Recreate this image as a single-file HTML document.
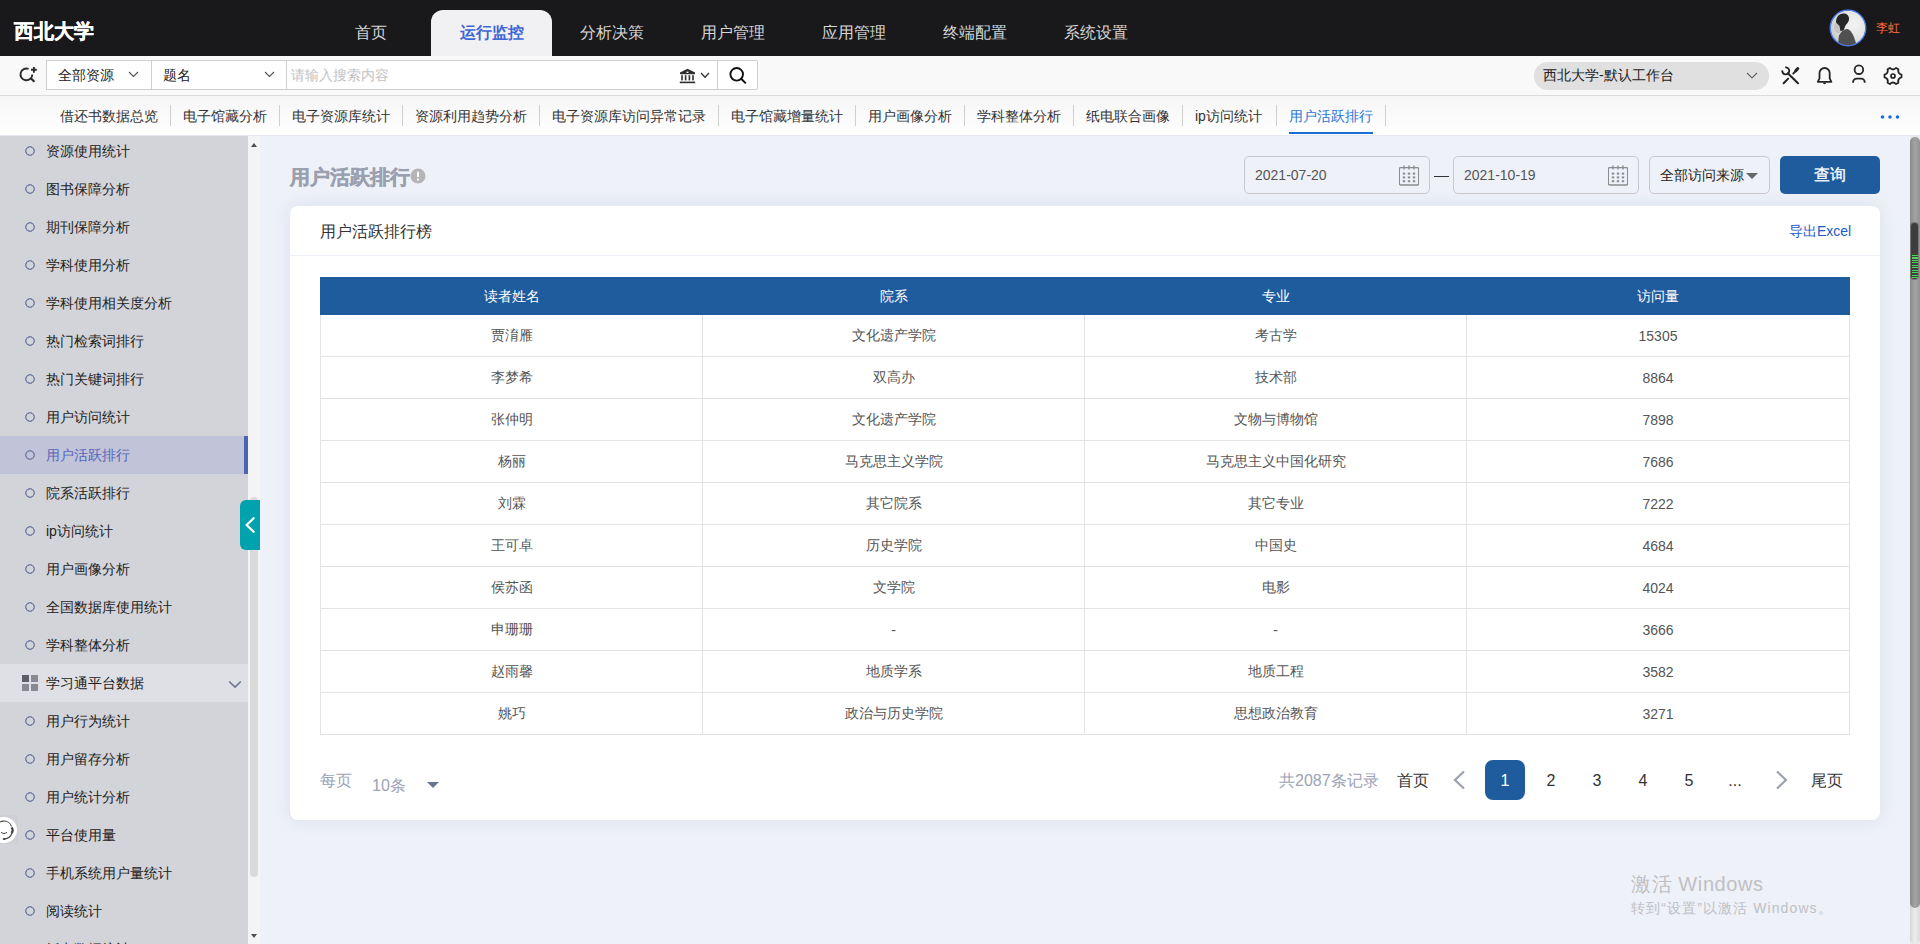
<!DOCTYPE html>
<html><head><meta charset="utf-8">
<style>
*{box-sizing:border-box;margin:0;padding:0}
html,body{width:1920px;height:944px;overflow:hidden;font-family:"Liberation Sans",sans-serif;background:#eef1f8;position:relative;color:#333}
.abs{position:absolute}
.b{-webkit-text-stroke:0.5px currentColor}
#top{left:0;top:0;width:1920px;height:56px;background:#19191b}
#logo{left:14px;top:17px;font-size:20px;color:#fff;line-height:28px;font-weight:700;-webkit-text-stroke:0.4px #fff}
.nav{top:10px;height:46px;width:121px;text-align:center;font-size:16px;line-height:46px;color:#d6d6d6}
.nav.act{background:#f1f1f4;color:#3f66d6;border-radius:12px 12px 0 0;font-weight:700}
#avatar{left:1830px;top:10px;width:36px;height:36px;border-radius:50%;border:1px solid #4a7cf0;background:radial-gradient(circle at 65% 40%,#f4f4f4 0,#e2e2e2 45%,#bdbdbd 100%);overflow:hidden}
#uname{left:1876px;top:18px;font-size:12px;line-height:20px;color:#ff6d3f}
#bar2{left:0;top:56px;width:1920px;height:40px;background:#f9f9f9;border-bottom:1px solid #dcdcdc}
.sel{top:60px;height:30px;border:1px solid #cfcfcf;background:#fff;font-size:14px;line-height:28px;color:#222;padding-left:11px}
#tabs{left:0;top:96px;width:1920px;height:40px;background:linear-gradient(#f6f6f6,#fff);border-bottom:1px solid #e6e9f2}
.tab{top:96px;font-size:14px;line-height:40px;color:#333;white-space:nowrap}
.sep{top:105px;width:1px;height:21px;background:#d0d0d0}
.tab.act{color:#2576d6}
#side{left:0;top:136px;width:248px;height:808px;background:#d3d4d9;overflow:hidden;padding-top:0}
#side>div:first-child{margin-top:-4px}
.si{height:38px;position:relative;font-size:14px;line-height:38px;color:#222;padding-left:46px}
.si:before{content:"";position:absolute;left:24px;top:13px;width:12px;height:12px;background:radial-gradient(circle at 6px 6px,transparent 3.3px,#7882a6 3.8px,#7882a6 4.6px,transparent 5.1px)}
.si.act{background:#c1c3d8;color:#5566b8}
.si.act:after{content:"";position:absolute;right:0;top:0;width:4px;height:38px;background:#4f63b4}
.grp{height:38px;position:relative;font-size:14px;line-height:38px;color:#222;padding-left:46px;background:#dfe0e5}
#sscroll{left:248px;top:136px;width:12px;height:808px;background:#f4f4f4}
#rscroll{left:1910px;top:136px;width:10px;height:808px;background:#e9e9e9}
#title{left:290px;top:163px;font-size:20px;line-height:28px;color:#9aa0b0;font-weight:700;-webkit-text-stroke:0.4px #9aa0b0}
.inp{top:156px;height:38px;border:1px solid #c9c9cc;border-radius:5px;font-size:14px;line-height:36px;color:#555;padding-left:10px}
#card{left:290px;top:206px;width:1590px;height:614px;background:#fff;border-radius:8px;box-shadow:0 0 16px rgba(180,190,220,0.35)}
table{border-collapse:collapse;table-layout:fixed}
td,th{text-align:center;font-size:14px;color:#555;height:42px;border:1px solid #e3e3e3;font-weight:normal;padding-top:1px}
th{background:#1f5c9e;color:#fff;height:37px;border-color:#1f5c9e}
.pg{top:760px;width:40px;height:40px;text-align:center;line-height:42px;font-size:16px;color:#333}
</style></head><body>
<div id="top" class="abs"></div>
<div id="logo" class="abs">西北大学</div>
<div class="abs nav" style="left:310px">首页</div>
<div class="abs nav act" style="left:431px">运行监控</div>
<div class="abs nav" style="left:551px">分析决策</div>
<div class="abs nav" style="left:672px">用户管理</div>
<div class="abs nav" style="left:793px">应用管理</div>
<div class="abs nav" style="left:914px">终端配置</div>
<div class="abs nav" style="left:1035px">系统设置</div>
<svg class="abs" style="left:1829px;top:9px" width="38" height="38" viewBox="0 0 38 38"><defs><clipPath id="ac"><circle cx="19" cy="19" r="17.5"/></clipPath><radialGradient id="ag" cx="0.65" cy="0.4" r="0.75"><stop offset="0" stop-color="#f3f3f3"/><stop offset="0.55" stop-color="#e2e2e2"/><stop offset="1" stop-color="#bcbcbc"/></radialGradient></defs><g clip-path="url(#ac)"><rect width="38" height="38" fill="url(#ag)"/><ellipse cx="9.5" cy="18" rx="4.5" ry="6.5" fill="#c4c4c4"/><path d="M7 13c0-5 3-8 7-8.5 4-.3 6.5 2.5 6 6-.3 2.5-2 4-3.5 6l-2 5-3 .5-1-5c-1-1.5-2.5-2-3.5-4z" fill="#262626"/><path d="M9 38l.8-11c2-4 5-7 8.5-7 3.5 1 5.5 5 7 9l3 9z" fill="#505050"/></g><circle cx="19" cy="19" r="17.8" fill="none" stroke="#4a7ef5" stroke-width="1.3"/></svg>
<div id="uname" class="abs">李虹</div>

<div id="bar2" class="abs"></div>
<svg class="abs" style="left:18px;top:64px" width="22" height="22" viewBox="0 0 22 22"><path d="M10.6 4.9A5.9 5.9 0 1 0 14.3 10.4" fill="none" stroke="#2b2b2b" stroke-width="1.9"/><path d="M12.8 14.2l3.6 3.6" stroke="#2b2b2b" stroke-width="2.2"/><path d="M15.9 2.9v5.8M13 5.8h5.8" stroke="#2b2b2b" stroke-width="1.9"/></svg>
<div class="abs sel" style="left:46px;width:106px">全部资源</div>
<svg class="abs" style="left:128px;top:71px" width="11" height="7" viewBox="0 0 11 7"><path d="M1 1l4.5 4.5L10 1" fill="none" stroke="#555" stroke-width="1.2"/></svg>
<div class="abs sel" style="left:151px;width:136px;border-left:1px solid #cfcfcf">题名</div>
<svg class="abs" style="left:264px;top:71px" width="11" height="7" viewBox="0 0 11 7"><path d="M1 1l4.5 4.5L10 1" fill="none" stroke="#555" stroke-width="1.2"/></svg>
<div class="abs sel" style="left:286px;width:432px;color:#c3c3c3;padding-left:4px">请输入搜索内容</div>
<svg class="abs" style="left:679px;top:68px" width="17" height="16" viewBox="0 0 17 16"><path d="M8.5 0.8L1 4.6V6.2H16V4.6Z" fill="#2d2d2d"/><rect x="7.6" y="3.6" width="1.8" height="1.4" fill="#fff"/><rect x="2.2" y="7.2" width="1.6" height="5.2" fill="#2d2d2d"/><rect x="5.8" y="7.2" width="1.6" height="5.2" fill="#2d2d2d"/><rect x="9.6" y="7.2" width="1.6" height="5.2" fill="#2d2d2d"/><rect x="13.2" y="7.2" width="1.6" height="5.2" fill="#2d2d2d"/><rect x="0.8" y="13.6" width="15.4" height="1.6" fill="#2d2d2d"/></svg>
<svg class="abs" style="left:700px;top:72px" width="10" height="7" viewBox="0 0 10 7"><path d="M1 1l4 4.2L9 1" fill="none" stroke="#333" stroke-width="1.3"/></svg>
<div class="abs sel" style="left:717px;width:41px;border-radius:0 2px 2px 0"></div>
<svg class="abs" style="left:728px;top:66px" width="20" height="20" viewBox="0 0 20 20"><circle cx="8.7" cy="8.3" r="6.3" fill="none" stroke="#111" stroke-width="1.9"/><path d="M13.2 12.8l4.6 4.6" stroke="#111" stroke-width="2"/></svg>
<div class="abs" style="left:1534px;top:62px;width:235px;height:28px;border-radius:14px;background:#e0e0e0;font-size:14px;line-height:26px;color:#222;padding-left:9px">西北大学-默认工作台</div>
<svg class="abs" style="left:1746px;top:72px" width="12" height="8" viewBox="0 0 12 8"><path d="M1 1l5 5 5-5" fill="none" stroke="#666" stroke-width="1.2"/></svg>
<svg class="abs" style="left:1780px;top:65px" width="22" height="22" viewBox="0 0 22 22"><path d="M5.2 2.4A3.5 3.5 0 1 1 2.3 5.3" fill="none" stroke="#222" stroke-width="1.9"/><path d="M7.8 8.2L18 18.3" stroke="#222" stroke-width="2" stroke-linecap="round"/><path d="M8.2 13.6L3.6 18.2" stroke="#222" stroke-width="2" stroke-linecap="round"/><path d="M13.2 8.6L15.6 6.2" stroke="#222" stroke-width="1.9" stroke-linecap="round"/><path d="M15.8 5.8L17.8 3.6" stroke="#222" stroke-width="3" stroke-linecap="round"/></svg>
<svg class="abs" style="left:1815px;top:65px" width="20" height="22" viewBox="0 0 20 22"><path d="M4.5 13.4V8.1a5.1 5.1 0 0 1 10.2 0v5.3l1.7 3.4H2.8z" fill="none" stroke="#262626" stroke-width="1.8" stroke-linejoin="round"/><path d="M8 17.4a1.6 1.8 0 0 0 3.2 0z" fill="#262626"/></svg>
<svg class="abs" style="left:1849px;top:63px" width="20" height="22" viewBox="0 0 20 22"><circle cx="9.9" cy="6.7" r="4.3" fill="none" stroke="#262626" stroke-width="1.8"/><path d="M4.1 19.8V19.2a3.6 3.6 0 0 1 3.6-3.6h4.4a3.6 3.6 0 0 1 3.6 3.6V19.8" fill="none" stroke="#262626" stroke-width="1.9"/></svg>
<svg class="abs" style="left:1882px;top:65px" width="22" height="22" viewBox="0 0 22 22"><path d="M19.49 9.65L19.49 12.35Q15.33 13.50 16.41 17.68L14.08 19.03Q11.00 16.00 7.92 19.03L5.59 17.68Q6.67 13.50 2.51 12.35L2.51 9.65Q6.67 8.50 5.59 4.32L7.92 2.97Q11.00 6.00 14.08 2.97L16.41 4.32Q15.33 8.50 19.49 9.65Z" fill="none" stroke="#222" stroke-width="1.8" stroke-linejoin="round"/><circle cx="11" cy="11" r="2" fill="none" stroke="#222" stroke-width="1.7"/></svg>


<div id="tabs" class="abs"></div>
<div class="abs tab" style="left:60px">借还书数据总览</div><div class="abs sep" style="left:170px"></div>
<div class="abs tab" style="left:183px">电子馆藏分析</div><div class="abs sep" style="left:279px"></div>
<div class="abs tab" style="left:292px">电子资源库统计</div><div class="abs sep" style="left:402px"></div>
<div class="abs tab" style="left:415px">资源利用趋势分析</div><div class="abs sep" style="left:539px"></div>
<div class="abs tab" style="left:552px">电子资源库访问异常记录</div><div class="abs sep" style="left:718px"></div>
<div class="abs tab" style="left:731px">电子馆藏增量统计</div><div class="abs sep" style="left:855px"></div>
<div class="abs tab" style="left:868px">用户画像分析</div><div class="abs sep" style="left:964px"></div>
<div class="abs tab" style="left:977px">学科整体分析</div><div class="abs sep" style="left:1073px"></div>
<div class="abs tab" style="left:1086px">纸电联合画像</div><div class="abs sep" style="left:1182px"></div>
<div class="abs tab" style="left:1195px">ip访问统计</div><div class="abs sep" style="left:1276px"></div>
<div class="abs tab act" style="left:1289px">用户活跃排行</div><div class="abs sep" style="left:1385px"></div>
<div class="abs" style="left:1289px;top:132px;width:84px;height:2px;background:#1a6fd4"></div>

<svg class="abs" style="left:1878px;top:112px" width="24" height="10" viewBox="0 0 24 10"><circle cx="4.5" cy="5" r="1.8" fill="#1a70d2"/><circle cx="12" cy="5" r="1.8" fill="#1a70d2"/><circle cx="19.5" cy="5" r="1.8" fill="#1a70d2"/></svg>

<div id="side" class="abs">
<div class="si">资源使用统计</div>
<div class="si">图书保障分析</div>
<div class="si">期刊保障分析</div>
<div class="si">学科使用分析</div>
<div class="si">学科使用相关度分析</div>
<div class="si">热门检索词排行</div>
<div class="si">热门关键词排行</div>
<div class="si">用户访问统计</div>
<div class="si act">用户活跃排行</div>
<div class="si">院系活跃排行</div>
<div class="si">ip访问统计</div>
<div class="si">用户画像分析</div>
<div class="si">全国数据库使用统计</div>
<div class="si">学科整体分析</div>
<div class="grp"><span style="position:absolute;left:22px;top:11px;width:7px;height:7px;background:#5f5f68"></span><span style="position:absolute;left:31px;top:11px;width:7px;height:7px;background:#898991"></span><span style="position:absolute;left:22px;top:20px;width:7px;height:7px;background:#898991"></span><span style="position:absolute;left:31px;top:20px;width:7px;height:7px;background:#898991"></span>学习通平台数据<svg style="position:absolute;left:228px;top:16px" width="14" height="9" viewBox="0 0 14 9"><path d="M1.2 1.5l5.8 5.6 5.8-5.6" fill="none" stroke="#6d7590" stroke-width="1.6"/></svg></div>
<div class="si">用户行为统计</div>
<div class="si">用户留存分析</div>
<div class="si">用户统计分析</div>
<div class="si">平台使用量</div>
<div class="si">手机系统用户量统计</div>
<div class="si">阅读统计</div>
<div class="si">纸电数据统计</div>
</div>
<div id="sscroll" class="abs"></div>
<div class="abs" style="left:251px;top:143px;width:0;height:0;border-left:3.5px solid transparent;border-right:3.5px solid transparent;border-bottom:4px solid #505050"></div>
<div class="abs" style="left:251px;top:934px;width:0;height:0;border-left:3.5px solid transparent;border-right:3.5px solid transparent;border-top:4px solid #505050"></div>
<div class="abs" style="left:250px;top:497px;width:8px;height:380px;border-radius:4px;background:#dadada"></div>
<div class="abs" style="left:240px;top:500px;width:20px;height:50px;border-radius:6px 0 0 6px;background:#00a2ad"></div>
<svg class="abs" style="left:244px;top:515px" width="12" height="20" viewBox="0 0 12 20"><path d="M9.6 3.2L2.6 10l7 6.8" fill="none" stroke="#fff" stroke-width="2.3" stroke-linecap="round" stroke-linejoin="round"/></svg>
<div class="abs" style="left:0;top:815px;width:18px;height:29px;background:#cfd0d5"></div>
<svg class="abs" style="left:0;top:815px" width="20" height="30" viewBox="0 0 20 30"><circle cx="4" cy="15" r="13" fill="#fff"/><path d="M-4 13a8 8 0 0 1 15.5 -1.5" fill="none" stroke="#444" stroke-width="1.1"/><path d="M11.5 12.5c1.5 1.5 1.5 4 0 5.5" fill="none" stroke="#444" stroke-width="2.4"/><path d="M12 18a9 9 0 0 1 -7.5 6" fill="none" stroke="#444" stroke-width="1.1"/><ellipse cx="4.2" cy="24" rx="1.6" ry="1" fill="#444"/><path d="M1 17.5q3 2.2 6 0" fill="none" stroke="#444" stroke-width="1"/></svg>
<div id="rscroll" class="abs"></div>
<div class="abs" style="left:1910px;top:137px;width:10px;height:770px;border-radius:5px 5px 5px 5px;background:linear-gradient(90deg,#8a8a8a,#a3a3a3 50%,#929292)"></div>
<div class="abs" style="left:1910px;top:900px;width:10px;height:44px;border-radius:0 0 5px 5px;background:linear-gradient(90deg,#d6d6d6,#ececec 50%,#dcdcdc)"></div>
<div class="abs" style="left:1910px;top:896px;width:10px;height:12px;border-radius:0 0 5px 5px;background:linear-gradient(90deg,#8a8a8a,#a3a3a3 50%,#929292)"></div>
<div class="abs" style="left:1910px;top:222px;width:9px;height:58px;border-radius:4px;background:#3d3d3d;border:1px solid #777"></div>
<div class="abs" style="left:1911.5px;top:255px;width:6px;height:23px;background:repeating-linear-gradient(#4fd65a 0 1px,#3d3d3d 1px 2.5px)"></div>

<div id="title" class="abs">用户活跃排行</div>
<svg class="abs" style="left:410px;top:168px" width="16" height="16" viewBox="0 0 16 16"><circle cx="8" cy="8" r="7.5" fill="#b5b5b7"/><rect x="7" y="3.6" width="2" height="5.6" rx="1" fill="#fff"/><circle cx="8" cy="11.6" r="1.1" fill="#fff"/></svg>
<div class="abs inp" style="left:1244px;width:186px">2021-07-20</div>
<div class="abs inp" style="left:1453px;width:186px">2021-10-19</div>
<svg class="abs" style="left:1399px;top:165px" width="20" height="21" viewBox="0.5 0 20 21"><rect x="0.8" y="2.6" width="19.4" height="17.4" rx="1.5" fill="none" stroke="#8c8c8c" stroke-width="1.4"/><path d="M5.5 0.5v4M10.5 0.5v4M15.5 0.5v4" stroke="#8c8c8c" stroke-width="1.4"/><g fill="#8c8c8c"><rect x="4.3" y="7.6" width="2.4" height="2"/><rect x="9.3" y="7.6" width="2.4" height="2"/><rect x="14.3" y="7.6" width="2.4" height="2"/><rect x="4.3" y="11.4" width="2.4" height="2"/><rect x="9.3" y="11.4" width="2.4" height="2"/><rect x="14.3" y="11.4" width="2.4" height="2"/><rect x="4.3" y="15.2" width="2.4" height="2"/><rect x="9.3" y="15.2" width="2.4" height="2"/><rect x="14.3" y="15.2" width="2.4" height="2"/></g></svg>
<svg class="abs" style="left:1608px;top:165px" width="20" height="21" viewBox="0.5 0 20 21"><rect x="0.8" y="2.6" width="19.4" height="17.4" rx="1.5" fill="none" stroke="#8c8c8c" stroke-width="1.4"/><path d="M5.5 0.5v4M10.5 0.5v4M15.5 0.5v4" stroke="#8c8c8c" stroke-width="1.4"/><g fill="#8c8c8c"><rect x="4.3" y="7.6" width="2.4" height="2"/><rect x="9.3" y="7.6" width="2.4" height="2"/><rect x="14.3" y="7.6" width="2.4" height="2"/><rect x="4.3" y="11.4" width="2.4" height="2"/><rect x="9.3" y="11.4" width="2.4" height="2"/><rect x="14.3" y="11.4" width="2.4" height="2"/><rect x="4.3" y="15.2" width="2.4" height="2"/><rect x="9.3" y="15.2" width="2.4" height="2"/><rect x="14.3" y="15.2" width="2.4" height="2"/></g></svg>
<div class="abs" style="left:1434px;top:176px;width:15px;height:1px;background:#333"></div>
<div class="abs" style="left:1746px;top:173px;width:0;height:0;border-left:6px solid transparent;border-right:6px solid transparent;border-top:6px solid #666"></div>
<div class="abs inp" style="left:1649px;width:121px;color:#222">全部访问来源</div>
<div class="abs" style="left:1780px;top:156px;width:100px;height:38px;border-radius:5px;background:#1f5c9e;color:#fff;font-size:16px;line-height:38px;text-align:center;-webkit-text-stroke:0.3px #fff">查询</div>

<div id="card" class="abs"></div>
<div class="abs" style="left:320px;top:221px;font-size:16px;line-height:22px;color:#333">用户活跃排行榜</div>
<div class="abs" style="left:1789px;top:220px;font-size:14px;line-height:22px;color:#1a5cc8">导出Excel</div>
<div class="abs" style="left:290px;top:255px;width:1590px;height:1px;background:#eef0f7"></div>

<table class="abs" style="left:320px;top:277px;width:1529px">
<colgroup><col style="width:382px"><col style="width:382px"><col style="width:382px"><col style="width:383px"></colgroup>
<tr><th>读者姓名</th><th>院系</th><th>专业</th><th>访问量</th></tr>
<tr><td>贾淯雁</td><td>文化遗产学院</td><td>考古学</td><td>15305</td></tr>
<tr><td>李梦希</td><td>双高办</td><td>技术部</td><td>8864</td></tr>
<tr><td>张仲明</td><td>文化遗产学院</td><td>文物与博物馆</td><td>7898</td></tr>
<tr><td>杨丽</td><td>马克思主义学院</td><td>马克思主义中国化研究</td><td>7686</td></tr>
<tr><td>刘霖</td><td>其它院系</td><td>其它专业</td><td>7222</td></tr>
<tr><td>王可卓</td><td>历史学院</td><td>中国史</td><td>4684</td></tr>
<tr><td>侯苏函</td><td>文学院</td><td>电影</td><td>4024</td></tr>
<tr><td>申珊珊</td><td>-</td><td>-</td><td>3666</td></tr>
<tr><td>赵雨馨</td><td>地质学系</td><td>地质工程</td><td>3582</td></tr>
<tr><td>姚巧</td><td>政治与历史学院</td><td>思想政治教育</td><td>3271</td></tr>
</table>

<div class="abs" style="left:320px;top:770px;font-size:16px;line-height:22px;color:#9ca3b6">每页</div>
<div class="abs" style="left:372px;top:775px;font-size:16px;line-height:22px;color:#9ca3b6">10条</div>
<div class="abs" style="left:427px;top:782px;width:0;height:0;border-left:6px solid transparent;border-right:6px solid transparent;border-top:6px solid #6b7590"></div>

<div class="abs" style="left:1279px;top:770px;font-size:16px;line-height:22px;color:#9ca3b6">共2087条记录</div>
<div class="abs" style="left:1397px;top:770px;font-size:16px;line-height:22px;color:#333">首页</div>
<svg class="abs" style="left:1451px;top:770px" width="16" height="20" viewBox="0 0 16 20"><path d="M13 1.5L4 10l9 8.5" fill="none" stroke="#9ba1ae" stroke-width="2.2"/></svg>
<div class="abs pg" style="left:1485px;background:#1f5c9e;color:#fff;border-radius:8px">1</div>
<div class="abs pg" style="left:1531px">2</div>
<div class="abs pg" style="left:1577px">3</div>
<div class="abs pg" style="left:1623px">4</div>
<div class="abs pg" style="left:1669px">5</div>
<div class="abs pg" style="left:1715px">...</div>
<svg class="abs" style="left:1774px;top:770px" width="16" height="20" viewBox="0 0 16 20"><path d="M3 1.5l9 8.5-9 8.5" fill="none" stroke="#9ba1ae" stroke-width="2.2"/></svg>
<div class="abs" style="left:1811px;top:770px;font-size:16px;line-height:22px;color:#333">尾页</div>

<div class="abs" style="left:1631px;top:871px;font-size:20px;line-height:26px;color:#bfc0c4;letter-spacing:0.6px">激活 Windows</div>
<div class="abs" style="left:1631px;top:898px;font-size:14px;line-height:20px;color:#bfc0c4;letter-spacing:1.1px">转到“设置”以激活 Windows。</div>
</body></html>
